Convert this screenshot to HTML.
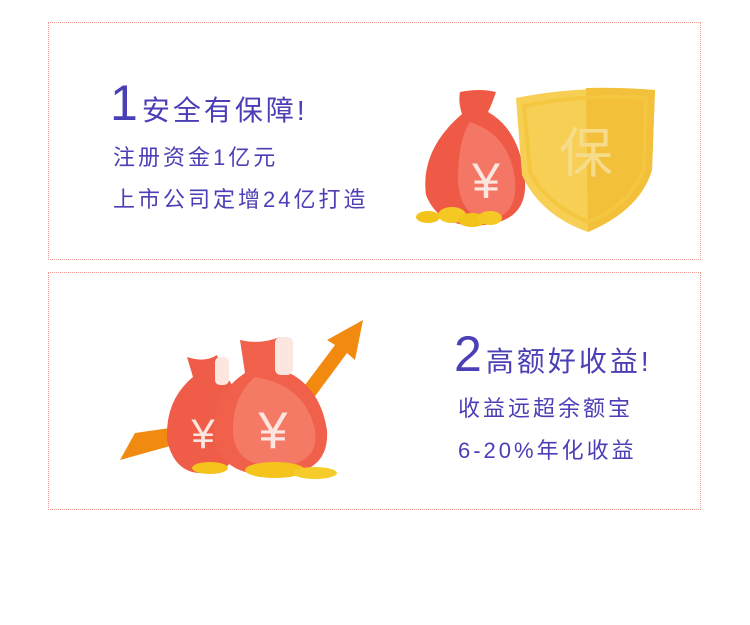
<!DOCTYPE html>
<html><head><meta charset="utf-8"><style>
*{margin:0;padding:0}
body{width:750px;height:625px;background:#fff;position:relative;overflow:hidden;font-family:"Liberation Sans","Noto Sans CJK SC",sans-serif;color:#4a3fb4}
.box{position:absolute;left:48px;width:653px;height:238px;border:1px dotted #ee9a94;box-sizing:border-box}
.t{position:absolute;white-space:nowrap}
.big{font-size:50px;line-height:50px;margin-right:4px}
.h{font-size:28px;letter-spacing:3px}
.s{font-size:22px;line-height:26px;letter-spacing:3px}
svg{position:absolute}
</style></head><body>
<div class="box" style="top:22px"></div>
<div class="box" style="top:272px"></div>

<div class="t" style="left:110px;top:78px"><span class="big">1</span><span class="h">安全有保障!</span></div>
<div class="t s" style="left:113px;top:145px">注册资金1亿元</div>
<div class="t s" style="left:113px;top:187px">上市公司定增24亿打造</div>

<div class="t" style="left:454px;top:329px"><span class="big">2</span><span class="h">高额好收益!</span></div>
<div class="t s" style="left:458px;top:396px">收益远超余额宝</div>
<div class="t s" style="left:458px;top:438px">6-20%年化收益</div>

<svg style="left:400px;top:80px" width="270" height="160" viewBox="0 0 270 160">
<path d="M60 12 Q80 8 96 12 Q92 24 88 32 Q120 50 125 100 Q128 140 85 145 Q40 150 26 115 Q20 70 62 34 Q58 22 60 12Z" fill="#ee5a45"/>
<path d="M70 42 Q110 55 115 100 Q118 135 90 140 Q60 138 58 100 Q58 60 70 42Z" fill="#f47766"/>
<text x="86" y="118" font-size="50" fill="#fde5e0" text-anchor="middle" font-family="Liberation Sans,Noto Sans CJK SC,sans-serif">¥</text>
<ellipse cx="28" cy="137" rx="12" ry="6" fill="#f2c31a"/>
<ellipse cx="52" cy="135" rx="14" ry="8" fill="#f6c824"/>
<ellipse cx="72" cy="140" rx="14" ry="7" fill="#f2c31a"/>
<ellipse cx="90" cy="138" rx="12" ry="7" fill="#f6c824"/>
<path d="M116 18 Q180 5 255 10 L252 90 Q240 130 188 152 Q140 135 122 95Z" fill="#f7cf55"/>
<path d="M186 8 Q220 7 255 10 L252 90 Q240 130 188 152Z" fill="#f2c03a"/>
<path d="M124 26 Q180 14 246 18 L244 88 Q232 124 188 142 Q146 124 130 92Z" fill="none" stroke="#f5c640" stroke-width="4"/>
<text x="186" y="92" font-size="54" fill="#f6dc8a" text-anchor="middle" font-family="Noto Sans CJK SC,sans-serif">保</text>
</svg>

<svg style="left:115px;top:315px" width="260" height="170" viewBox="0 0 260 170">
<path d="M5 145 L20 118 L90 108 L95 120 Z" fill="#f08a10"/>
<path d="M160 110 L220 30 L212 25 L248 5 L240 45 L232 38 L175 115Z" fill="#f28a10"/>
<path d="M72 42 Q90 48 102 40 L110 60 Q128 80 125 120 Q120 160 90 158 Q60 160 52 125 Q50 85 78 62Z" fill="#ef5d48"/>
<text x="88" y="133" font-size="42" fill="#fde5e0" text-anchor="middle" font-family="Liberation Sans,sans-serif">¥</text>
<rect x="100" y="42" width="14" height="28" rx="5" fill="#fbe7df"/>
<path d="M125 25 Q145 30 165 22 L168 55 Q205 70 212 115 Q215 160 160 160 Q108 162 100 125 Q96 80 130 58Z" fill="#f0604a"/>
<path d="M140 62 Q190 70 200 115 Q205 150 160 152 Q118 150 118 115 Q118 80 140 62Z" fill="#f57a66"/>
<text x="158" y="133" font-size="52" fill="#fde5e0" text-anchor="middle" font-family="Liberation Sans,sans-serif">¥</text>
<rect x="160" y="22" width="18" height="38" rx="6" fill="#fbe7df"/>
<ellipse cx="95" cy="153" rx="18" ry="6" fill="#f4c31c"/>
<ellipse cx="160" cy="155" rx="30" ry="8" fill="#f4c31c"/>
<ellipse cx="200" cy="158" rx="22" ry="6" fill="#f6cc2a"/>
</svg>
</body></html>
